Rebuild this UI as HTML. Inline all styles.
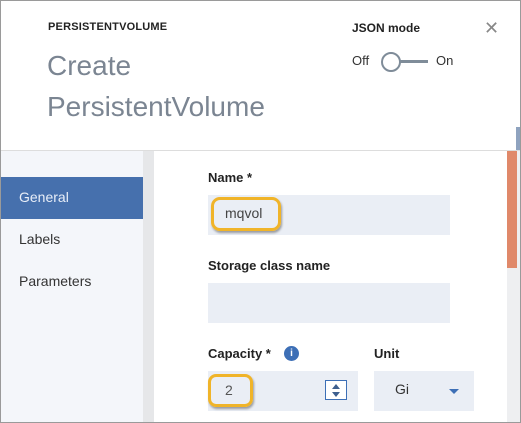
<!DOCTYPE html>
<html><head><style>
*{margin:0;padding:0;box-sizing:border-box}
body{width:521px;height:423px;overflow:hidden;font-family:"Liberation Sans",sans-serif;background:#fff;position:relative}
.a{position:absolute}
</style></head><body>
<div class="a" style="left:0;top:0;width:521px;height:423px;border:1px solid #9a9a9a;z-index:10"></div>
<div class="a" style="left:48px;top:21px;font-size:11px;font-weight:bold;color:#222;letter-spacing:0.2px">PERSISTENTVOLUME</div>
<div class="a" style="left:47px;top:50px;font-size:28px;color:#7b8592">Create</div>
<div class="a" style="left:47px;top:91px;font-size:28px;color:#7b8592">PersistentVolume</div>
<div class="a" style="left:352px;top:21px;font-size:12px;font-weight:bold;color:#222">JSON mode</div>
<div class="a" style="left:352px;top:53px;font-size:13px;color:#333">Off</div>
<div class="a" style="left:396px;top:60px;width:32px;height:3px;background:#7f8c99"></div>
<div class="a" style="left:381px;top:52px;width:20px;height:20px;border:2px solid #7f8c99;border-radius:50%;background:#fff"></div>
<div class="a" style="left:436px;top:53px;font-size:13px;color:#333">On</div>
<div class="a" style="left:484px;top:18px;font-size:18px;color:#888">✕</div>
<div class="a" style="left:516px;top:127px;width:5px;height:23px;background:#8fa3bf"></div>
<div class="a" style="left:0;top:150px;width:521px;height:1px;background:#ddd"></div>
<div class="a" style="left:0;top:151px;width:143px;height:272px;background:#f4f6fa"></div>
<div class="a" style="left:143px;top:151px;width:11px;height:272px;background:#e6e7e9"></div>
<div class="a" style="left:507px;top:151px;width:14px;height:272px;background:#eeeff1"></div>
<div class="a" style="left:507px;top:151px;width:10px;height:117px;background:#e0896a"></div>
<div class="a" style="left:0;top:177px;width:143px;height:42px;background:#4670ad"></div>
<div class="a" style="left:19px;top:189px;font-size:14px;color:#e8eef8">General</div>
<div class="a" style="left:19px;top:231px;font-size:14px;color:#333">Labels</div>
<div class="a" style="left:19px;top:273px;font-size:14px;color:#333">Parameters</div>
<div class="a" style="left:208px;top:170px;font-size:13px;font-weight:bold;color:#222">Name *</div>
<div class="a" style="left:208px;top:195px;width:242px;height:40px;background:#eaeef5"></div>
<div class="a" style="left:211px;top:197px;width:70px;height:34px;border:3px solid #f0b429;border-radius:9px;box-shadow:1px 2px 2px rgba(0,0,0,.35)"></div>
<div class="a" style="left:225px;top:205px;font-size:14px;color:#444">mqvol</div>
<div class="a" style="left:208px;top:258px;font-size:13px;font-weight:bold;color:#222">Storage class name</div>
<div class="a" style="left:208px;top:283px;width:242px;height:40px;background:#eaeef5"></div>
<div class="a" style="left:208px;top:346px;font-size:13px;font-weight:bold;color:#222">Capacity *</div>
<div class="a" style="left:284px;top:346px;width:15px;height:15px;border-radius:50%;background:#3d6fb6;color:#fff;font-size:10px;font-weight:bold;text-align:center;line-height:15px">i</div>
<div class="a" style="left:374px;top:346px;font-size:13px;font-weight:bold;color:#222">Unit</div>
<div class="a" style="left:208px;top:371px;width:150px;height:40px;background:#eaeef5"></div>
<div class="a" style="left:208px;top:374px;width:45px;height:33px;border:3px solid #f0b429;border-radius:8px;box-shadow:1px 2px 2px rgba(0,0,0,.35)"></div>
<div class="a" style="left:225px;top:382px;font-size:14px;color:#555">2</div>
<div class="a" style="left:325px;top:380px;width:22px;height:20px;border:1px solid #3d6fb6;background:#fff"></div>
<div class="a" style="left:332px;top:384px;width:0;height:0;border-left:4px solid transparent;border-right:4px solid transparent;border-bottom:5px solid #3d5f8f"></div>
<div class="a" style="left:332px;top:392px;width:0;height:0;border-left:4px solid transparent;border-right:4px solid transparent;border-top:5px solid #3d5f8f"></div>
<div class="a" style="left:374px;top:371px;width:100px;height:40px;background:#eaeef5"></div>
<div class="a" style="left:395px;top:381px;font-size:14px;color:#333">Gi</div>
<div class="a" style="left:449px;top:389px;width:0;height:0;border-left:5px solid transparent;border-right:5px solid transparent;border-top:5px solid #3d6fb6"></div>
</body></html>
